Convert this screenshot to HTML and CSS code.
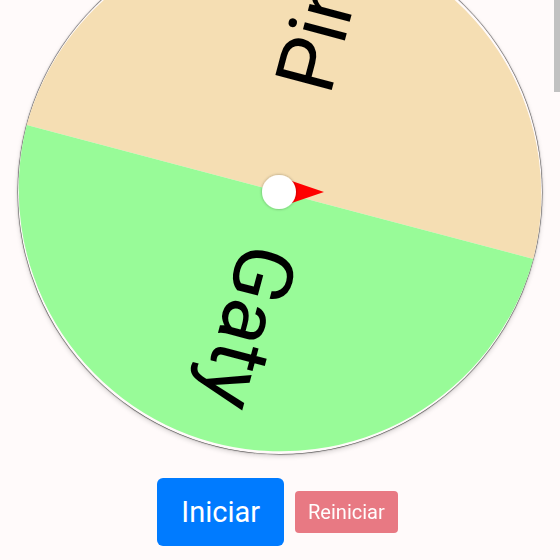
FILE: index.html
```html
<!DOCTYPE html>
<html lang="es">
<head>
    <meta charset="UTF-8">
    <meta name="viewport" content="width=device-width, initial-scale=1.0">
    <title>Ruleta</title>
    <link rel="stylesheet" href="styles.css">
</head>
<body>
    <div class="page">
        <div class="wheel">
            <svg class="wheel-svg" width="524" height="524" viewBox="0 0 524 524">
                <defs>
                    <filter id="hubShadow" x="-50%" y="-50%" width="200%" height="200%">
                        <feDropShadow dx="0" dy="0" stdDeviation="1.5" flood-color="#000" flood-opacity="0.35"/>
                    </filter>
                </defs>
                <!-- segments -->
                <path d="M262,262 L8.7,195.1 A262,262 0 0 1 515.3,328.9 Z" fill="#f5deb3"/>
                <path d="M262,262 L515.3,328.9 A262,262 0 0 1 8.7,195.1 Z" fill="#98fb98"/>
                <!-- labels -->
                <text class="label" x="484" y="286" text-anchor="end" transform="rotate(-75.2 262 262)">Pin</text>
                <text class="label" x="484" y="286" text-anchor="end" transform="rotate(104.8 262 262)">Gaty</text>
                <!-- pointer -->
                <polygon points="262,247 306,262 262,277" fill="#ff0000"/>
                <circle cx="261" cy="262" r="17" fill="#ffffff" filter="url(#hubShadow)"/>
            </svg>
        </div>

        <div class="controls">
            <button class="btn btn-primary btn-big">Iniciar</button>
            <button class="btn btn-danger" disabled>Reiniciar</button>
        </div>
    </div>
    <div class="scroll-thumb"></div>
</body>
</html>
```

FILE: styles.css
```css
body {
    margin: 0;
    padding: 0;
    background-color: #fffafa;
    font-family: Roboto, "Liberation Sans", Arial, sans-serif;
    overflow: hidden;
}
.page {
    display: flex;
    flex-direction: column;
    align-items: center;
}
.wheel {
    width: 524px;
    height: 524px;
    margin-top: -70px;
    border-radius: 50%;
    box-shadow: 0 0 1px 0.5px rgba(0, 0, 0, 0.7), 0 2px 5px rgba(0, 0, 0, 0.18);
}
.wheel-svg {
    display: block;
}
.label {
    font-family: Roboto, "Liberation Sans", Arial, sans-serif;
    font-size: 82px;
    fill: #000;
}
.controls {
    display: flex;
    align-items: center;
    gap: 11px;
    margin-top: 24px;
    padding-right: 5px;
}
.btn {
    border: none;
    color: #fff;
    font-family: Roboto, "Liberation Sans", Arial, sans-serif;
    cursor: pointer;
}
.btn-primary {
    background-color: #007bff;
}
.btn-big {
    font-size: 29px;
    line-height: 44px;
    padding: 12px 24px;
    border-radius: 6px;
}
.btn-danger {
    background-color: #dc3545;
    font-size: 20px;
    line-height: 30px;
    padding: 6px 13px;
    border-radius: 4px;
}
.btn-danger:disabled {
    opacity: 0.65;
    cursor: default;
}
.scroll-thumb {
    position: fixed;
    top: 0;
    right: 0;
    width: 6px;
    height: 92px;
    background-color: #c1c1c1;
}
```
